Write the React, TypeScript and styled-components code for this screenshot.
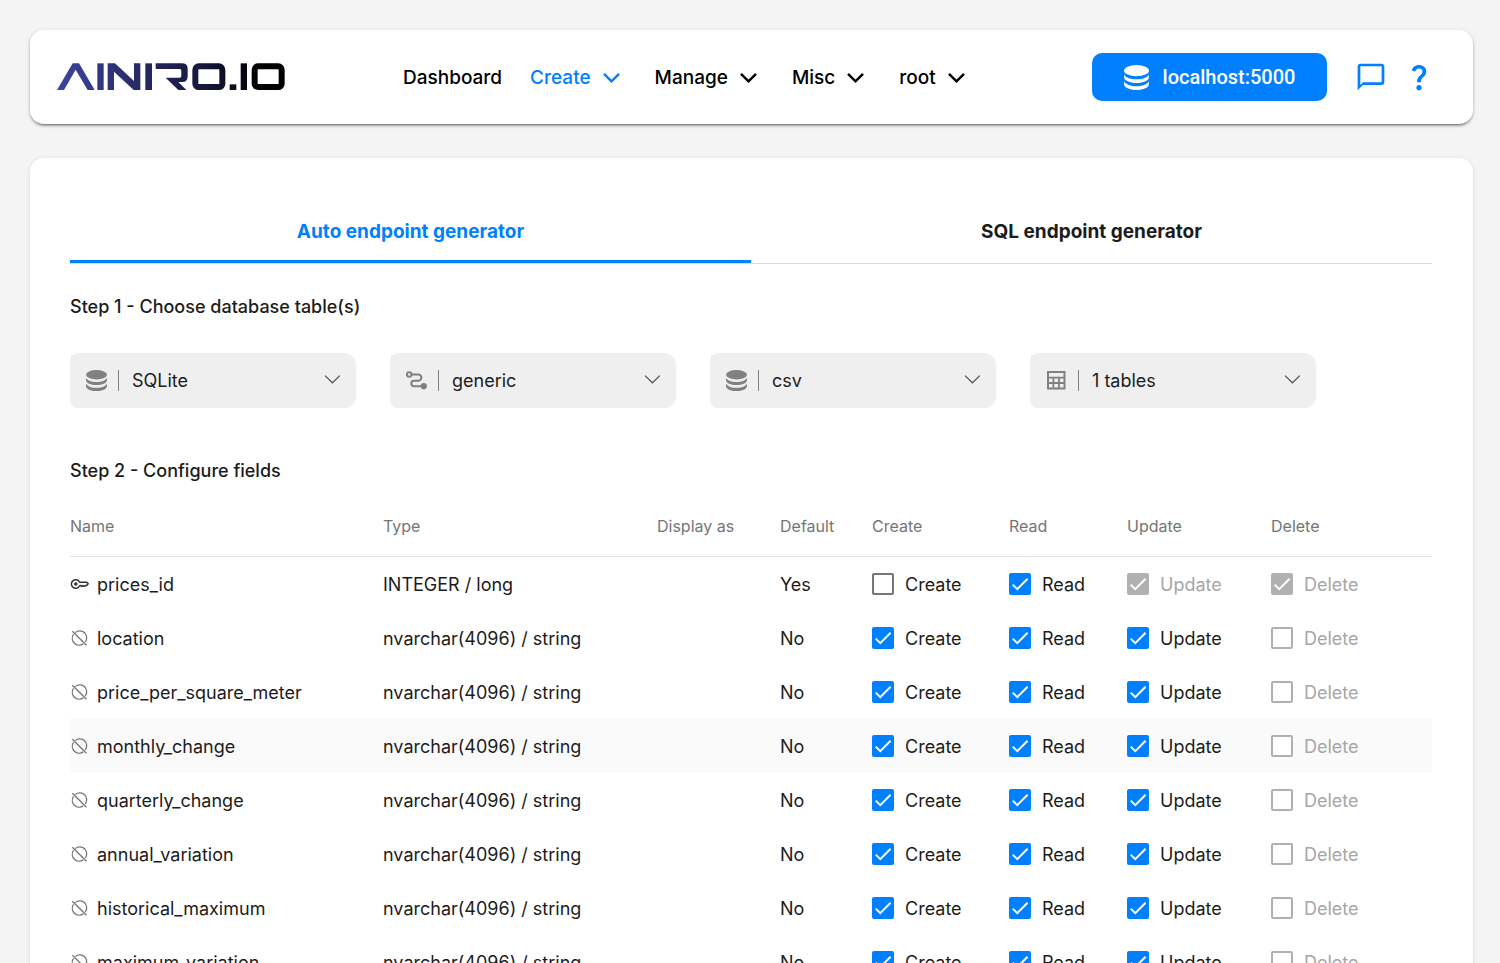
import React from "react";
import styled, { createGlobalStyle, css } from "styled-components";
import { MdOutlineChatBubbleOutline, MdQuestionMark } from "react-icons/md";

const BLUE = "#0080ff";

const GlobalStyle = createGlobalStyle`
  * { box-sizing: border-box; }
  body {
    margin: 0;
    background: #f4f4f4;
    color: #1c1c1c;
    font-family: Inter, "Liberation Sans", sans-serif;
    font-size: 18px;
  }
  button, select, input { font: inherit; color: inherit; }
`;

const Page = styled.div`
  height: 100vh;
  overflow-y: auto;
  scrollbar-width: none;
  padding: 30px 27px 30px 30px;
  display: flex;
  flex-direction: column;
  gap: 34px;
`;

const Header = styled.header`
  flex: none;
  display: flex;
  align-items: center;
  height: 94px;
  padding: 0 38px 0 27px;
  background: #fff;
  border-radius: 14px;
  box-shadow: 0 3px 2px -2px rgba(0, 0, 0, 0.35), 0 2px 3px rgba(0, 0, 0, 0.2), 0 1px 5px rgba(0, 0, 0, 0.12);
`;

const LogoLink = styled.a`
  display: flex;
  flex: none;
`;

const Nav = styled.nav`
  display: flex;
  align-items: center;
  gap: 28px;
  margin-left: 118px;
  padding-top: 2px;
`;

const navItem = css`
  padding: 0;
  border: 0;
  background: none;
  font-size: 19px;
  font-weight: 500;
  line-height: 24px;
  text-decoration: none;
  white-space: nowrap;
  cursor: pointer;
`;

const NavLink = styled.a`
  ${navItem}
  color: #000;
`;

const NavButton = styled.button<{ $active?: boolean }>`
  ${navItem}
  display: flex;
  align-items: center;
  gap: 12px;
  color: ${(p) => (p.$active ? BLUE : "#000")};
`;

const HeaderActions = styled.div`
  display: flex;
  align-items: center;
  margin-left: auto;
`;

const HostButton = styled.button`
  display: flex;
  align-items: center;
  justify-content: center;
  gap: 14px;
  width: 235px;
  height: 48px;
  margin-right: 28px;
  border: 0;
  border-radius: 10px;
  background: ${BLUE};
  color: #fff;
  font-family: Roboto, "Liberation Sans", sans-serif;
  font-size: 20px;
  font-weight: 500;
  cursor: pointer;
`;

const IconButton = styled.button`
  display: flex;
  padding: 0;
  margin-right: 16px;
  border: 0;
  background: none;
  color: ${BLUE};
  cursor: pointer;
  &:last-child { margin-right: 0; }
`;

const Card = styled.main`
  flex: none;
  padding: 40px 41px 60px 40px;
  background: #fff;
  border-radius: 14px;
  box-shadow: 0 1px 4px rgba(0, 0, 0, 0.12);
`;

const Tabs = styled.div`
  display: grid;
  grid-template-columns: 1fr 1fr;
  border-bottom: 1px solid #dcdcdc;
`;

const Tab = styled.button<{ $active?: boolean }>`
  height: 65px;
  padding: 4px 0 0;
  border: 0;
  border-bottom: 3px solid ${(p) => (p.$active ? BLUE : "transparent")};
  background: none;
  color: ${(p) => (p.$active ? BLUE : "#1c1c1c")};
  font-size: 19px;
  font-weight: 700;
  cursor: pointer;
`;

const StepTitle = styled.h2`
  margin: 0;
  font-size: 18px;
  font-weight: 500;
  line-height: 24px;
`;

const Step = styled.section`
  padding-top: 31px;
`;

const Filters = styled.div`
  display: grid;
  grid-template-columns: repeat(4, minmax(0, 286px));
  gap: 34px;
  margin: 34px 0 20px;
`;

const Field = styled.label`
  display: flex;
  align-items: center;
  height: 55px;
  padding: 0 16px;
  border-radius: 8px 12px 12px 8px;
  background: #efefef;
  color: #808080;
  svg { flex: none; }
`;

const Divider = styled.span`
  width: 1px;
  height: 21px;
  margin: 0 13px 0 11px;
  background: #808080;
`;

const Select = styled.select`
  flex: 1;
  min-width: 0;
  height: 100%;
  padding: 0;
  border: 0;
  outline: 0;
  appearance: none;
  background: transparent;
  color: #1c1c1c;
`;

const Table = styled.table`
  width: 100%;
  margin-top: 12px;
  border-collapse: separate;
  border-spacing: 0;
  table-layout: fixed;
`;

const Col = styled.col<{ $width?: number }>`
  width: ${(p) => (p.$width ? `${p.$width}px` : "auto")};
`;

const HeadCell = styled.th`
  height: 62px;
  padding: 0;
  border-bottom: 1px solid #e4e4e4;
  color: #757575;
  font-size: 16px;
  font-weight: 400;
  text-align: left;
`;

const Row = styled.tr<{ $hover?: boolean }>`
  background: ${(p) => (p.$hover ? "#fafafa" : "transparent")};
`;

const Cell = styled.td`
  height: 54px;
  padding: 0;
  white-space: nowrap;
`;

const NameWrap = styled.span`
  display: flex;
  align-items: center;
  gap: 7px;
`;

const Check = styled.label<{ $disabled?: boolean }>`
  display: flex;
  align-items: center;
  gap: 11px;
  width: fit-content;
  color: ${(p) => (p.$disabled ? "#a6a6a6" : "#1c1c1c")};
`;

const BoxWrap = styled.span`
  position: relative;
  display: flex;
  width: 22px;
  height: 22px;
  svg {
    position: absolute;
    inset: 0;
    pointer-events: none;
  }
`;

const Box = styled.input`
  appearance: none;
  width: 22px;
  height: 22px;
  margin: 0;
  border: 2px solid #757575;
  border-radius: 2px;
  background: #fff;
  &:checked { border-color: ${BLUE}; background: ${BLUE}; }
  &:disabled { border-color: #b0b0b0; }
  &:checked:disabled { background: #b0b0b0; }
  &:not(:checked) + svg { display: none; }
`;

const Logo = () => (
  <svg width="228" height="28" viewBox="110 130 684 84" role="img" aria-label="AINIRO.IO">
    <defs>
      <linearGradient id="brand" gradientUnits="userSpaceOnUse" x1="110" y1="211" x2="794" y2="131">
        <stop offset="0" stopColor="#3d45a2" />
        <stop offset="0.35" stopColor="#272b66" />
        <stop offset="0.65" stopColor="#15163a" />
        <stop offset="0.9" stopColor="#000" />
      </linearGradient>
    </defs>
    <g fill="url(#brand)">
      <path d="M110 211L157 131H176L223 211H202L166 150L131 211Z" />
      <rect x="231" y="131" width="19" height="80" />
      <path d="M262 211V131H284L341 184V131H360V211H340L281 156V211Z" />
      <rect x="375" y="131" width="20" height="80" />
      <path d="M406 131H484Q502 131 502 147V169Q502 187 486 187H474L498 211H474L436 174H478Q483 174 483 168V153Q483 148 478 148H406Z" />
      <rect x="628" y="194" width="20" height="17" />
      <rect x="661" y="131" width="19" height="80" />
    </g>
    <g fill="none" stroke="url(#brand)" strokeWidth="18">
      <rect x="525" y="140" width="81" height="62" rx="10" />
      <rect x="703" y="140" width="81" height="62" rx="10" />
    </g>
  </svg>
);

const DatabaseIcon = ({ size }: { size: number }) => (
  <svg width={size} height={size} viewBox="0 0 24 24" fill="currentColor" aria-hidden="true">
    <ellipse cx="12" cy="5.4" rx="12" ry="5.4" />
    <path d="M0 9C2 12.2 6.6 13.7 12 13.7S22 12.2 24 9V11.4C24 14.8 18.6 17.2 12 17.2S0 14.8 0 11.4Z" />
    <path d="M0 15.6C2 18.8 6.6 20.4 12 20.4S22 18.8 24 15.6V18.2C24 21.6 18.6 24 12 24S0 21.6 0 18.2Z" />
  </svg>
);

const RouteIcon = () => (
  <svg width="21" height="21" viewBox="0 0 21 21" fill="none" stroke="currentColor" strokeWidth="2" aria-hidden="true">
    <circle cx="3.2" cy="4.5" r="2.3" />
    <path d="M5.5 4.5H12.2a2.9 2.9 0 0 1 0 6.3H8a2.6 2.6 0 0 0 0 5.4H16" />
    <circle cx="17.8" cy="16.2" r="3.1" fill="currentColor" stroke="none" />
  </svg>
);

const TableIcon = () => (
  <svg width="21" height="21" viewBox="0 0 21 21" fill="none" stroke="currentColor" aria-hidden="true">
    <path strokeWidth="2" d="M2 2H18.5V18.5H2Z" />
    <path strokeWidth="1.8" d="M2 7.6H18.5M2 13H18.5M7.4 7.6V18.5M13 7.6V18.5" />
  </svg>
);

const NavChevron = () => (
  <svg width="24" height="24" viewBox="0 0 24 24" fill="none" stroke="currentColor" strokeWidth="2.5" aria-hidden="true">
    <path d="M1 7.8L8.5 15.3L16 7.8" />
  </svg>
);

const FieldChevron = () => (
  <svg width="16" height="16" viewBox="0 0 16 16" fill="none" stroke="#555" strokeWidth="1.2" aria-hidden="true">
    <path d="M1 2.6L8.4 9.8L15.8 2.6" />
  </svg>
);

const KeyIcon = () => (
  <svg width="20" height="20" viewBox="0 0 20 20" fill="none" stroke="#333" strokeWidth="1.5" strokeLinejoin="round" role="img" aria-label="Primary key">
    <path d="M9.6 8.2A4.3 4.3 0 1 0 9.6 11.8L10.8 11.6L11.8 12.4L13 11.6L14.2 12.4L15.4 11.6H16.6L18.2 9.8L16.8 8.2Z" />
    <circle cx="5.8" cy="10" r="1.8" fill="#333" stroke="none" />
  </svg>
);

const NoKeyIcon = () => (
  <svg width="20" height="20" viewBox="0 0 20 20" fill="none" stroke="#757575" strokeWidth="1.3" aria-hidden="true">
    <path d="M2.4 3.2L16.4 17.2M5.4 4.4A6.9 6.9 0 0 1 15.2 14M13.2 15.9A6.9 6.9 0 0 1 3.5 6.4" />
  </svg>
);

interface CheckFieldProps {
  label: string;
  checked: boolean;
  disabled?: boolean;
}

const CheckField = ({ label, checked, disabled }: CheckFieldProps) => (
  <Check $disabled={disabled}>
    <BoxWrap>
      <Box type="checkbox" defaultChecked={checked} disabled={disabled} />
      <svg width="22" height="22" viewBox="0 0 24 24" fill="none" stroke="#fff" strokeWidth="2.2" aria-hidden="true">
        <path d="M4.1 12.7L9 17.6L20.3 6.3" />
      </svg>
    </BoxWrap>
    {label}
  </Check>
);

interface FilterProps {
  icon: React.ReactNode;
  label: string;
  value: string;
}

const Filter = ({ icon, label, value }: FilterProps) => (
  <Field>
    {icon}
    <Divider />
    <Select aria-label={label} defaultValue={value}>
      <option>{value}</option>
    </Select>
    <FieldChevron />
  </Field>
);

const columns: { title: string; width?: number }[] = [
  { title: "Name" },
  { title: "Type", width: 274 },
  { title: "Display as", width: 123 },
  { title: "Default", width: 92 },
  { title: "Create", width: 137 },
  { title: "Read", width: 118 },
  { title: "Update", width: 144 },
  { title: "Delete", width: 161 },
];

const fields = [
  { name: "prices_id", type: "INTEGER / long", primary: true },
  ...[
    "location",
    "price_per_square_meter",
    "monthly_change",
    "quarterly_change",
    "annual_variation",
    "historical_maximum",
    "maximum_variation",
  ].map((name) => ({ name, type: "nvarchar(4096) / string", primary: false })),
];

export default function App() {
  return (
    <>
      <GlobalStyle />
      <Page>
        <Header>
          <LogoLink href="#">
            <Logo />
          </LogoLink>
          <Nav>
            <NavLink href="#">Dashboard</NavLink>
            <NavButton $active>Create<NavChevron /></NavButton>
            <NavButton>Manage<NavChevron /></NavButton>
            <NavButton>Misc<NavChevron /></NavButton>
            <NavButton>root<NavChevron /></NavButton>
          </Nav>
          <HeaderActions>
            <HostButton>
              <DatabaseIcon size={25} />
              localhost:5000
            </HostButton>
            <IconButton aria-label="Chat">
              <MdOutlineChatBubbleOutline size={32} />
            </IconButton>
            <IconButton aria-label="Help">
              <MdQuestionMark size={32} />
            </IconButton>
          </HeaderActions>
        </Header>

        <Card>
          <Tabs role="tablist">
            <Tab role="tab" aria-selected="true" $active>Auto endpoint generator</Tab>
            <Tab role="tab" aria-selected="false">SQL endpoint generator</Tab>
          </Tabs>

          <Step>
            <StepTitle>Step 1 - Choose database table(s)</StepTitle>
            <Filters>
              <Filter icon={<DatabaseIcon size={21} />} label="Database type" value="SQLite" />
              <Filter icon={<RouteIcon />} label="Connection" value="generic" />
              <Filter icon={<DatabaseIcon size={21} />} label="Database" value="csv" />
              <Filter icon={<TableIcon />} label="Tables" value="1 tables" />
            </Filters>
          </Step>

          <Step>
            <StepTitle>Step 2 - Configure fields</StepTitle>
            <Table>
              <colgroup>
                {columns.map((c) => <Col key={c.title} $width={c.width} />)}
              </colgroup>
              <thead>
                <tr>
                  {columns.map((c) => <HeadCell key={c.title} scope="col">{c.title}</HeadCell>)}
                </tr>
              </thead>
              <tbody>
                {fields.map((f) => (
                  <Row key={f.name} $hover={f.name === "monthly_change"}>
                    <Cell>
                      <NameWrap>
                        {f.primary ? <KeyIcon /> : <NoKeyIcon />}
                        {f.name}
                      </NameWrap>
                    </Cell>
                    <Cell>{f.type}</Cell>
                    <Cell />
                    <Cell>{f.primary ? "Yes" : "No"}</Cell>
                    <Cell><CheckField label="Create" checked={!f.primary} /></Cell>
                    <Cell><CheckField label="Read" checked /></Cell>
                    <Cell><CheckField label="Update" checked disabled={f.primary} /></Cell>
                    <Cell><CheckField label="Delete" checked={f.primary} disabled /></Cell>
                  </Row>
                ))}
              </tbody>
            </Table>
          </Step>
        </Card>
      </Page>
    </>
  );
}
